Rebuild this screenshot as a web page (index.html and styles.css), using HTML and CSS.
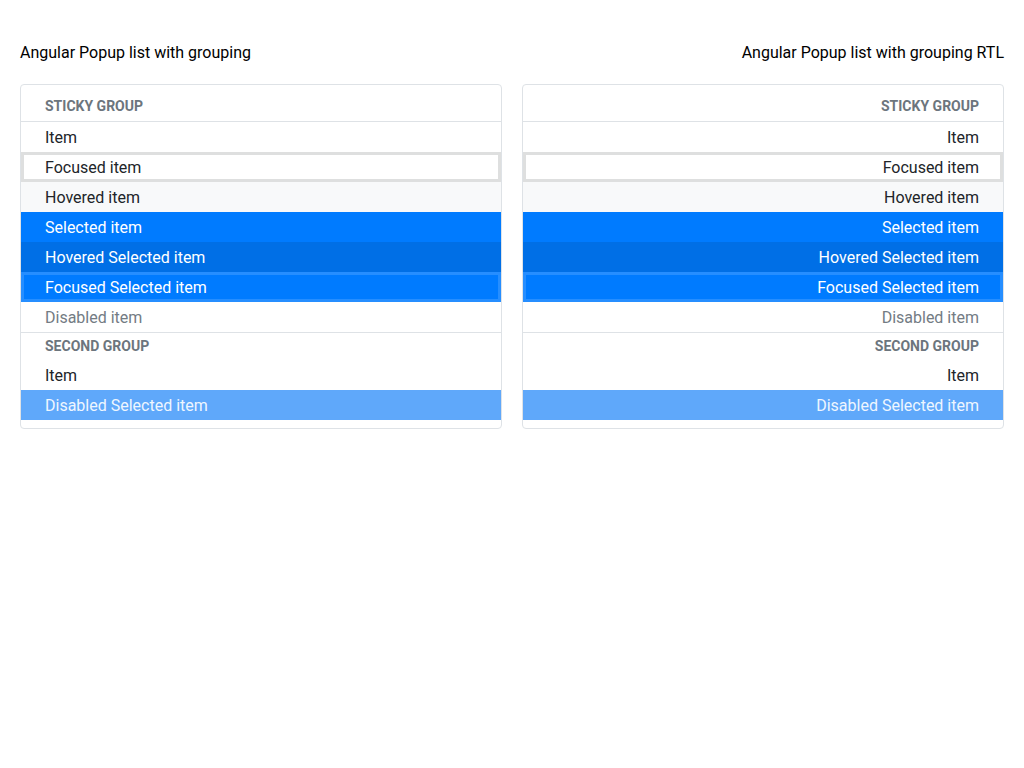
FILE: index.html
```html
<!DOCTYPE html>
<html lang="en">
<head>
<meta charset="utf-8">
<title>Angular Popup list with grouping</title>
<link rel="stylesheet" href="styles.css">
</head>
<body>
<main class="page">
  <section class="demo">
    <h2 class="demo-title">Angular Popup list with grouping</h2>
    <div class="list">
      <div class="list-header">Sticky group</div>
      <ul class="list-items">
        <li class="item">Item</li>
        <li class="item focused">Focused item</li>
        <li class="item hovered">Hovered item</li>
        <li class="item selected">Selected item</li>
        <li class="item selected hovered">Hovered Selected item</li>
        <li class="item selected focused">Focused Selected item</li>
        <li class="item disabled">Disabled item</li>
        <li class="group">Second group</li>
        <li class="item">Item</li>
        <li class="item selected disabled">Disabled Selected item</li>
      </ul>
    </div>
  </section>
  <section class="demo rtl" dir="rtl">
    <h2 class="demo-title">Angular Popup list with grouping RTL</h2>
    <div class="list">
      <div class="list-header">Sticky group</div>
      <ul class="list-items">
        <li class="item">Item</li>
        <li class="item focused">Focused item</li>
        <li class="item hovered">Hovered item</li>
        <li class="item selected">Selected item</li>
        <li class="item selected hovered">Hovered Selected item</li>
        <li class="item selected focused">Focused Selected item</li>
        <li class="item disabled">Disabled item</li>
        <li class="group">Second group</li>
        <li class="item">Item</li>
        <li class="item selected disabled">Disabled Selected item</li>
      </ul>
    </div>
  </section>
</main>
</body>
</html>
```
FILE: styles.css
```css
* { box-sizing: border-box; }
html, body { margin: 0; padding: 0; background: #fff; }
body {
  font-family: Roboto, "Liberation Sans", Arial, sans-serif;
  color: #212529;
  font-size: 16px;
  line-height: 20px;
}
.page {
  display: grid;
  grid-template-columns: 1fr 1fr;
  column-gap: 20px;
  padding: 43px 20px 20px;
  align-items: start;
}
.demo-title {
  margin: 0 0 21px;
  font-size: 16px;
  font-weight: 400;
  line-height: 20px;
  color: #000;
}
.list {
  border: 1px solid #dee2e6;
  border-radius: 4px;
  background: #fff;
  overflow: hidden;
  padding-bottom: 8px;
}
.list-header {
  padding: 11px 24px 5px;
  font-size: 14px;
  font-weight: 700;
  line-height: 20px;
  text-transform: uppercase;
  color: #6c757d;
  border-bottom: 1px solid #dee2e6;
}
.list-items {
  list-style: none;
  margin: 0;
  padding: 0;
}
.item {
  padding: 6px 24px 4px;
  line-height: 20px;
  font-size: 16px;
  color: #212529;
}
.item.hovered { background: #f8f9fa; }
.item.focused { box-shadow: inset 0 0 0 3px rgba(33, 37, 41, 0.15); }
.item.selected { background: #007bff; color: #fff; }
.item.selected.hovered { background: #006fe6; }
.item.selected.focused { box-shadow: inset 0 0 0 3px rgba(255, 255, 255, 0.15); }
.item.disabled { color: #6c757d; opacity: 0.95; }
.item.selected.disabled { background: #5fa8fa; color: #eef6ff; opacity: 1; }
.group {
  padding: 3px 24px 4px;
  font-size: 14px;
  font-weight: 700;
  line-height: 20px;
  text-transform: uppercase;
  color: #6c757d;
  border-top: 1px solid #dee2e6;
}
.rtl { text-align: right; }
```
